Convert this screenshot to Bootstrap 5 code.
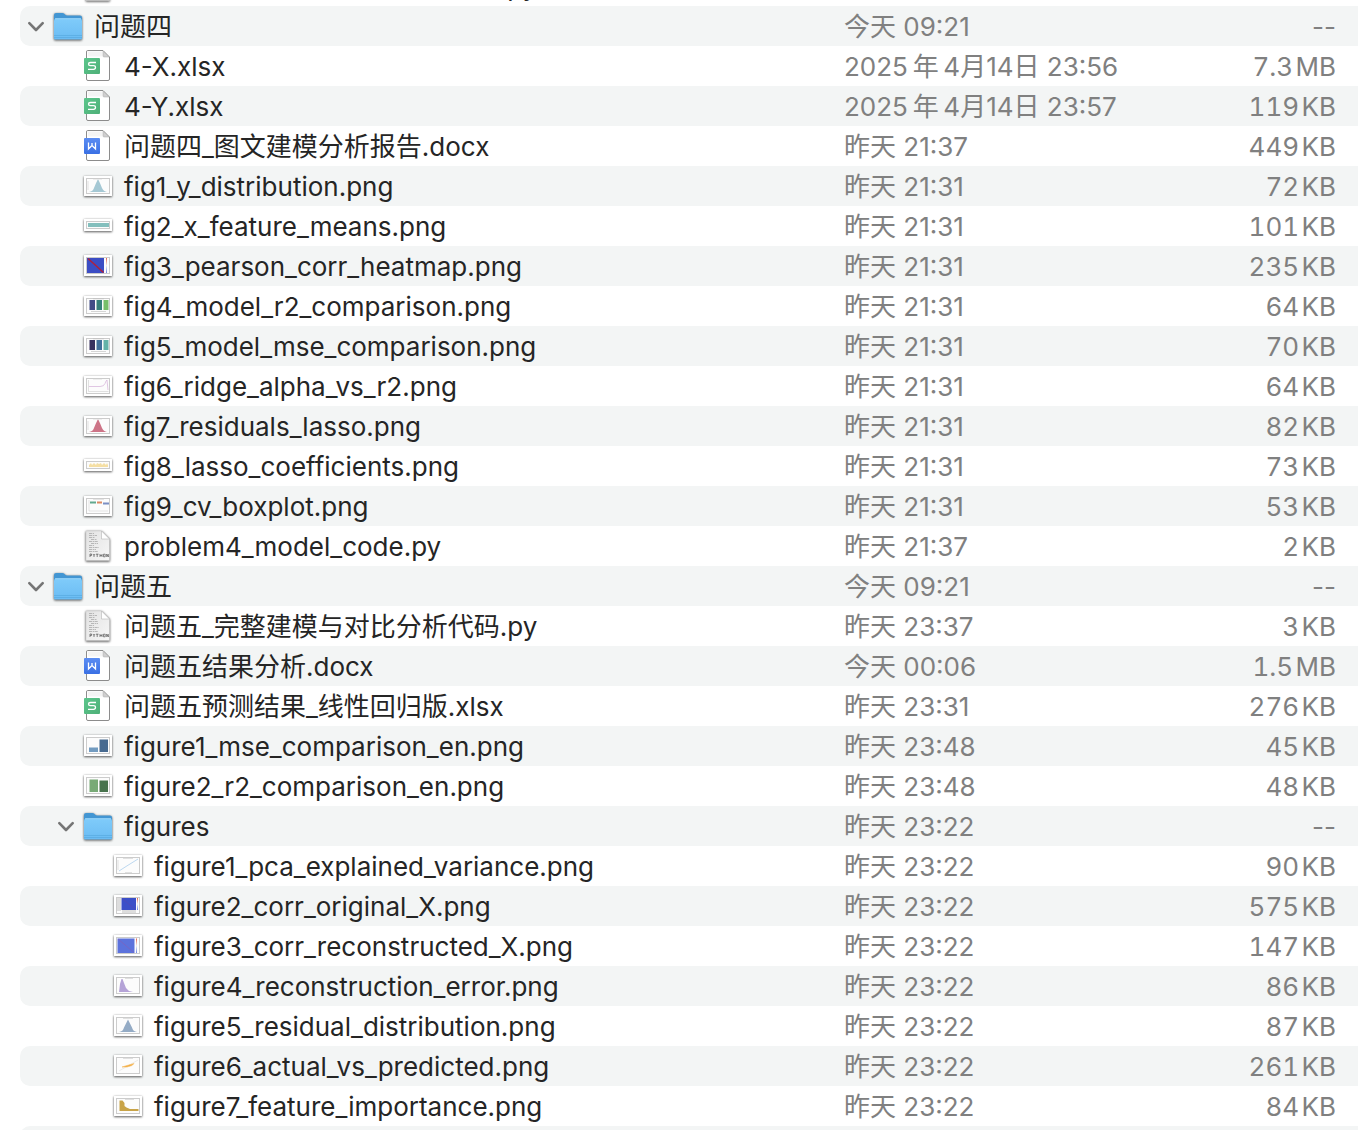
<!DOCTYPE html>
<html lang="zh-CN">
<head>
<meta charset="utf-8">
<meta name="viewport" content="width=device-width, initial-scale=1">
<title>文件列表</title>
<link rel="stylesheet" href="https://cdn.jsdelivr.net/npm/bootstrap@5.3.0/dist/css/bootstrap.min.css">
<script src="https://cdn.jsdelivr.net/npm/bootstrap@5.3.0/dist/js/bootstrap.bundle.min.js" defer></script>
<style>
  body { font-family: Inter, "Noto Sans CJK SC", sans-serif; font-size: 26px; line-height: 40px; color: #252525; background: #fff; }
  .finder { padding-left: 20px; }
  .file-table { margin-top: -34px; table-layout: fixed; border-collapse: separate; border-spacing: 0; }
  .file-table td { height: 40px; padding: 0; white-space: nowrap; }
  .file-table tr:nth-child(even) td { background: #f3f5f5; }
  .file-table td:first-child { border-radius: 10px 0 0 10px; }
  .col-date { width: 300px; }
  .col-size { width: 214px; }
  .when, .size { color: #808080; line-height: 38px; }
  .file-table .when { padding-top: 2px; }
  .file-table .size { padding: 2px 22px 0 0; text-align: right; font-variant-numeric: tabular-nums; }
  .file-table .no-size { font-variant-numeric: normal; }
  .entry { height: 40px; line-height: 42px; }
  .lv0 { padding-left: 4px; }
  .lv1 { padding-left: 62px; }
  .lv1.dir { padding-left: 34px; }
  .lv2 { padding-left: 92px; }
  .pic { width: 32px; height: 40px; flex: none; margin-right: 10px; }
  .twist { width: 24px; height: 40px; margin-right: 4px; line-height: 1; }
  .twist svg { width: 24px; height: 40px; display: block; }
  .shade { filter: drop-shadow(0 1px 1px rgba(0,0,0,.55)) drop-shadow(0 0 1px rgba(0,0,0,.2)); }
</style>
</head>
<body>
<svg width="0" height="0" class="position-absolute" aria-hidden="true">
  <defs>
    <linearGradient id="gFold" x1="0" y1="0" x2="0" y2="1"><stop offset="0" stop-color="#7fcbfa"/><stop offset="1" stop-color="#6bbcf3"/></linearGradient>
    <linearGradient id="gBlue" x1="0" y1="0" x2="0" y2="1"><stop offset="0" stop-color="#5b8df3"/><stop offset="1" stop-color="#3a70e4"/></linearGradient>
    <linearGradient id="gGreen" x1="0" y1="0" x2="1" y2="1"><stop offset="0" stop-color="#5cc68c"/><stop offset="1" stop-color="#4eb078"/></linearGradient>
    <linearGradient id="gPy" x1="0" y1="0" x2="1" y2="1"><stop offset="0" stop-color="#e2e2e2"/><stop offset="1" stop-color="#f7f7f7"/></linearGradient>
    <symbol id="chev" viewBox="0 0 24 40"><path d="M5.3 17.2 12 24l6.700-6.800" fill="none" stroke="#757575" stroke-width="2.600" stroke-linecap="round" stroke-linejoin="round"/></symbol>
    <symbol id="folder" viewBox="0 0 32 40">
      <path d="M2 33V9q0-2 2-2h6.500q1 0 1.800.8l1 1q.7.700 1.700.700h13q2 0 2 2V33z" fill="#4396d3"/>
      <path d="M2 15q0-2.500 2-2.500h24q2 0 2 2.500v17q0 1.600-1.600 1.600H3.600Q2 33.600 2 32z" fill="url(#gFold)"/>
      <path d="M3 12.700h26" stroke="#a6dcfb" stroke-width=".8"/><path d="M2 29.500h28M2 31.500h28" stroke="#58a9df" stroke-width=".7"/>
    </symbol>
    <symbol id="page" viewBox="0 0 32 40">
      <path d="M5.500 4.500h15.500l6.500 6.500v22q0 1.500-1.500 1.500H6q-1.500 0-1.500-1.500V6q0-1.500 1-1.500z" fill="#fff" stroke="#8c8c8c"/>
      <path d="M6 5.500h14.500v5H6z" fill="#f4f4f4"/><path d="M21 5v5q0 1 1 1h5z" fill="#cfcfcf" stroke="#aaa" stroke-width=".5"/>
    </symbol>
    <symbol id="xlsx" viewBox="0 0 32 40"><use href="#page"/><rect x="2" y="12" width="16" height="16" rx="1" fill="url(#gGreen)"/><path d="M14 16.500H8.500Q6.500 16.500 6.500 18t2 1.700h3q2 0 2 1.800t-2 1.800H6" fill="none" stroke="#fff" stroke-width="1.300"/></symbol>
    <symbol id="docx" viewBox="0 0 32 40"><use href="#page"/><rect x="2" y="12" width="16" height="16" rx="1" fill="url(#gBlue)"/><path d="M6.500 16.500V23l3.500-3.500 3.500 3.500v-6.500M10 17v2.500" fill="none" stroke="#fff" stroke-width="1.300"/></symbol>
    <symbol id="py" viewBox="0 0 32 40">
      <path d="M4 5h15.500L27.500 13v21.500H4z" fill="url(#gPy)" stroke="#c4c4c4" stroke-width=".5"/>
      <path d="M19.500 5v8h8z" fill="#fff" stroke="#b5b5b5" stroke-width=".6"/>
      <path d="M7 7.500h5M7 9.500h8M7 11.500h6M9 13.500h6M7 15.500h9M9 17.500h7M7 19.500h5M7 21.500h10M7 23.500h7M7 25.500h9" stroke="#aaa" stroke-width=".8" stroke-dasharray="3 .7 1.500 .5"/>
      <path d="M8 31v-3h1.500v1.500H8M11 28l1 1.500 1-1.500M12 29.500V31M14 28.200h2.500M15.200 28v3M18 28v3M20 28v3M18 29.500h2M21.500 28.200h1.700v2.600h-1.700zM24.700 31v-3l1.600 3v-3" fill="none" stroke="#666" stroke-width=".8"/>
    </symbol>
    <symbol id="frame" viewBox="0 0 32 40"><rect x="2" y="10" width="28" height="20" fill="#fff"/><rect x="4.500" y="12.500" width="23" height="15" fill="#fcfcfc" stroke="#ccc"/></symbol>
    <symbol id="tall" viewBox="0 0 32 40"><rect x="2" y="9" width="28" height="21" fill="#fff"/><rect x="4.500" y="11.500" width="23" height="16" fill="#fcfcfc" stroke="#ccc"/></symbol>
    <symbol id="slim" viewBox="0 0 32 40"><rect x="2" y="13" width="28" height="12" fill="#fff"/><rect x="4.500" y="15.500" width="23" height="7" fill="#fcfcfc" stroke="#ccc"/></symbol>
    <linearGradient id="gHeat" x1="0" y1="0" x2="0" y2="1"><stop offset="0" stop-color="#e06050"/><stop offset=".5" stop-color="#eee"/><stop offset="1" stop-color="#6d86e6"/></linearGradient>
  </defs>
</svg>

<main class="finder vh-100 overflow-hidden">
<table class="file-table w-100">
  <colgroup><col><col class="col-date"><col class="col-size"></colgroup>
  <tbody>
  <tr><td><div class="entry lv1 d-flex align-items-start"><svg class="pic shade"><use href="#py"/></svg>问题三_模型对比与结果分析代码.py</div></td><td class="when"></td><td class="size"></td></tr>
  <tr><td><div class="entry lv0 dir d-flex align-items-start"><button type="button" class="twist btn p-0 border-0" aria-label="折叠 问题四" aria-expanded="true"><svg><use href="#chev"/></svg></button><svg class="pic shade"><use href="#folder"/></svg>问题四</div></td><td class="when">今天 09:21</td><td class="size no-size">--</td></tr>
  <tr><td><div class="entry lv1 d-flex align-items-start"><svg class="pic"><use href="#xlsx"/></svg>4-X.xlsx</div></td><td class="when">2025&#8201;年&#8201;4月14日 23:56</td><td class="size">7.3&#8202;MB</td></tr>
  <tr><td><div class="entry lv1 d-flex align-items-start"><svg class="pic"><use href="#xlsx"/></svg>4-Y.xlsx</div></td><td class="when">2025&#8201;年&#8201;4月14日 23:57</td><td class="size">119&#8202;KB</td></tr>
  <tr><td><div class="entry lv1 d-flex align-items-start"><svg class="pic"><use href="#docx"/></svg>问题四_图文建模分析报告.docx</div></td><td class="when">昨天 21:37</td><td class="size">449&#8202;KB</td></tr>
  <tr><td><div class="entry lv1 d-flex align-items-start"><svg class="pic shade" viewBox="0 0 32 40"><use href="#frame"/><path d="M7 26q4-.5 5-4 2-5 3.500-8 .5-1 1 0 1.500 3 3.500 8 1.500 3.500 5 4z" fill="#a5c8d4"/><path d="M11 13h9M6 15v9" stroke="#ccc" stroke-width=".6"/></svg>fig1_y_distribution.png</div></td><td class="when">昨天 21:31</td><td class="size">72&#8202;KB</td></tr>
  <tr><td><div class="entry lv1 d-flex align-items-start"><svg class="pic shade" viewBox="0 0 32 40"><use href="#slim"/><path d="M6 17h21v4H6z" fill="#84bfbd"/></svg>fig2_x_feature_means.png</div></td><td class="when">昨天 21:31</td><td class="size">101&#8202;KB</td></tr>
  <tr><td><div class="entry lv1 d-flex align-items-start"><svg class="pic shade" viewBox="0 0 32 40"><use href="#tall"/><path d="M5 12h17v15H5z" fill="#3b4dc4"/><path d="m6 12.500 15.500 14" stroke="#b0203c" stroke-width="1.500"/><path d="M24 12h1v15h-1z" fill="url(#gHeat)"/></svg>fig3_pearson_corr_heatmap.png</div></td><td class="when">昨天 21:31</td><td class="size">235&#8202;KB</td></tr>
  <tr><td><div class="entry lv1 d-flex align-items-start"><svg class="pic shade" viewBox="0 0 32 40"><use href="#frame"/><path d="M7.500 14H13v10H7.500z" fill="#414c86"/><path d="M14.500 14H20v10h-5.500z" fill="#36807a"/><path d="M21.500 14h5v10h-5z" fill="#77bf69"/><path d="M11 12.800h11M9 25.500h15" stroke="#bbb" stroke-width=".6"/></svg>fig4_model_r2_comparison.png</div></td><td class="when">昨天 21:31</td><td class="size">64&#8202;KB</td></tr>
  <tr><td><div class="entry lv1 d-flex align-items-start"><svg class="pic shade" viewBox="0 0 32 40"><use href="#frame"/><path d="M7.500 14H13v10H7.500z" fill="#37305e"/><path d="M14.500 14H20v10h-5.500z" fill="#42709a"/><path d="M21.500 14h5v10h-5z" fill="#64b3a8"/><path d="M11 12.800h11M9 25.500h15" stroke="#bbb" stroke-width=".6"/></svg>fig5_model_mse_comparison.png</div></td><td class="when">昨天 21:31</td><td class="size">70&#8202;KB</td></tr>
  <tr><td><div class="entry lv1 d-flex align-items-start"><svg class="pic shade" viewBox="0 0 32 40"><use href="#frame"/><path d="M7 20.500h11q4 0 5-3t2-3.500l1 10" fill="none" stroke="#d8b7dc" stroke-width=".8"/><path d="M6.500 14v11.500h20M11 13h9" fill="none" stroke="#ccc" stroke-width=".6"/></svg>fig6_ridge_alpha_vs_r2.png</div></td><td class="when">昨天 21:31</td><td class="size">64&#8202;KB</td></tr>
  <tr><td><div class="entry lv1 d-flex align-items-start"><svg class="pic shade" viewBox="0 0 32 40"><use href="#frame"/><path d="M7 26q4-.5 5-4 2-5 3.500-8 .5-1 1 0 1.500 3 3.500 8 1.500 3.500 5 4z" fill="#cd7487"/><path d="M11 13h9M6 15v9" stroke="#ccc" stroke-width=".6"/></svg>fig7_residuals_lasso.png</div></td><td class="when">昨天 21:31</td><td class="size">82&#8202;KB</td></tr>
  <tr><td><div class="entry lv1 d-flex align-items-start"><svg class="pic shade" viewBox="0 0 32 40"><use href="#slim"/><path d="M7 21v-2l2-2 1 2 2-2 2 2 1-2 2 1 2-1 1 2 2-2 2 2 1-2 1 2v2z" fill="#f5dfa4"/></svg>fig8_lasso_coefficients.png</div></td><td class="when">昨天 21:31</td><td class="size">73&#8202;KB</td></tr>
  <tr><td><div class="entry lv1 d-flex align-items-start"><svg class="pic shade" viewBox="0 0 32 40"><use href="#frame"/><path d="M8 15.500h6v2H8z" fill="#62a98f"/><path d="M15 15.500h5v2h-5z" fill="#dd8b62"/><path d="M21 16.500h6v2h-6z" fill="#7b8fc3"/><path d="M11 13.500h11M7 14v11h19" fill="none" stroke="#d5d5d5" stroke-width=".6"/></svg>fig9_cv_boxplot.png</div></td><td class="when">昨天 21:31</td><td class="size">53&#8202;KB</td></tr>
  <tr><td><div class="entry lv1 d-flex align-items-start"><svg class="pic shade"><use href="#py"/></svg>problem4_model_code.py</div></td><td class="when">昨天 21:37</td><td class="size">2&#8202;KB</td></tr>
  <tr><td><div class="entry lv0 dir d-flex align-items-start"><button type="button" class="twist btn p-0 border-0" aria-label="折叠 问题五" aria-expanded="true"><svg><use href="#chev"/></svg></button><svg class="pic shade"><use href="#folder"/></svg>问题五</div></td><td class="when">今天 09:21</td><td class="size no-size">--</td></tr>
  <tr><td><div class="entry lv1 d-flex align-items-start"><svg class="pic shade"><use href="#py"/></svg>问题五_完整建模与对比分析代码.py</div></td><td class="when">昨天 23:37</td><td class="size">3&#8202;KB</td></tr>
  <tr><td><div class="entry lv1 d-flex align-items-start"><svg class="pic"><use href="#docx"/></svg>问题五结果分析.docx</div></td><td class="when">今天 00:06</td><td class="size">1.5&#8202;MB</td></tr>
  <tr><td><div class="entry lv1 d-flex align-items-start"><svg class="pic"><use href="#xlsx"/></svg>问题五预测结果_线性回归版.xlsx</div></td><td class="when">昨天 23:31</td><td class="size">276&#8202;KB</td></tr>
  <tr><td><div class="entry lv1 d-flex align-items-start"><svg class="pic shade" viewBox="0 0 32 40"><use href="#tall"/><path d="M7 21.500h9V26H7z" fill="#729bc0"/><path d="M17.500 13.500H26V26h-8.500z" fill="#476a90"/></svg>figure1_mse_comparison_en.png</div></td><td class="when">昨天 23:48</td><td class="size">45&#8202;KB</td></tr>
  <tr><td><div class="entry lv1 d-flex align-items-start"><svg class="pic shade" viewBox="0 0 32 40"><use href="#tall"/><path d="M7.500 13.500H16V26H7.500z" fill="#78aa76"/><path d="M17.500 14.500H26V26h-8.500z" fill="#48734d"/></svg>figure2_r2_comparison_en.png</div></td><td class="when">昨天 23:48</td><td class="size">48&#8202;KB</td></tr>
  <tr><td><div class="entry lv1 dir d-flex align-items-start"><button type="button" class="twist btn p-0 border-0" aria-label="折叠 figures" aria-expanded="true"><svg><use href="#chev"/></svg></button><svg class="pic shade"><use href="#folder"/></svg>figures</div></td><td class="when">昨天 23:22</td><td class="size no-size">--</td></tr>
  <tr><td><div class="entry lv2 d-flex align-items-start"><svg class="pic shade" viewBox="0 0 32 40"><use href="#tall"/><path d="m7 25 7-4.500 12-7.500" stroke="#bcd8f0" stroke-width="1" fill="none"/><path d="M11 12.500h10M6 14v10M13 26.500h7" stroke="#ccc" stroke-width=".6"/></svg>figure1_pca_explained_variance.png</div></td><td class="when">昨天 23:22</td><td class="size">90&#8202;KB</td></tr>
  <tr><td><div class="entry lv2 d-flex align-items-start"><svg class="pic shade" viewBox="0 0 32 40"><use href="#tall"/><path d="M5 12h4v13H5zM10 24h14v3H10z" fill="#ddd"/><path d="M9.500 12h14.500v12H9.500z" fill="#3b4fc8"/><path d="m10 12.500 13.500 11" stroke="#5547b2" stroke-width=".7"/><path d="M25 12h1v12h-1z" fill="url(#gHeat)"/></svg>figure2_corr_original_X.png</div></td><td class="when">昨天 23:22</td><td class="size">575&#8202;KB</td></tr>
  <tr><td><div class="entry lv2 d-flex align-items-start"><svg class="pic shade" viewBox="0 0 32 40"><use href="#tall"/><path d="M5.500 12.500h17V27h-17z" fill="#5c72dc"/><path d="M6 13l16 13.500" stroke="#7d62bd" stroke-width=".8"/><path d="M24 12.500h1V27h-1z" fill="url(#gHeat)"/></svg>figure3_corr_reconstructed_X.png</div></td><td class="when">昨天 23:22</td><td class="size">147&#8202;KB</td></tr>
  <tr><td><div class="entry lv2 d-flex align-items-start"><svg class="pic shade" viewBox="0 0 32 40"><use href="#tall"/><path d="M7 26l1-8 1.500-5h1l1.500 4 2 5 3 3 4 1z" fill="#b5a3d7"/><path d="M13 12.500h8" stroke="#ccc" stroke-width=".6"/></svg>figure4_reconstruction_error.png</div></td><td class="when">昨天 23:22</td><td class="size">86&#8202;KB</td></tr>
  <tr><td><div class="entry lv2 d-flex align-items-start"><svg class="pic shade" viewBox="0 0 32 40"><use href="#tall"/><path d="M7 26q4-.5 5-4.500l2.500-5 1.500-3 1.500 3 2.500 5q1 4 5 4.500z" fill="#94abc5"/><path d="M11 12.500h10" stroke="#ccc" stroke-width=".6"/></svg>figure5_residual_distribution.png</div></td><td class="when">昨天 23:22</td><td class="size">87&#8202;KB</td></tr>
  <tr><td><div class="entry lv2 d-flex align-items-start"><svg class="pic shade" viewBox="0 0 32 40"><use href="#tall"/><path d="m7 25 19-11" stroke="#ddd" stroke-width=".6"/><path d="m10 21 5-1.500 7-2-2 2-5 1.500z" fill="#f3a93b" stroke="#f6bd65" stroke-width=".6"/><path d="M11 12.500h10" stroke="#ccc" stroke-width=".6"/></svg>figure6_actual_vs_predicted.png</div></td><td class="when">昨天 23:22</td><td class="size">261&#8202;KB</td></tr>
  <tr><td><div class="entry lv2 d-flex align-items-start"><svg class="pic shade" viewBox="0 0 32 40"><use href="#frame"/><path d="M7.500 25V14.500h3l2 2.500v3l2 1.500L18 23h8.500v2z" fill="#c8a347"/><path d="M13 13.500h9" stroke="#ccc" stroke-width=".6"/></svg>figure7_feature_importance.png</div></td><td class="when">昨天 23:22</td><td class="size">84&#8202;KB</td></tr>
  <tr><td></td><td></td><td></td></tr>
  </tbody>
</table>
</main>
</body>
</html>
